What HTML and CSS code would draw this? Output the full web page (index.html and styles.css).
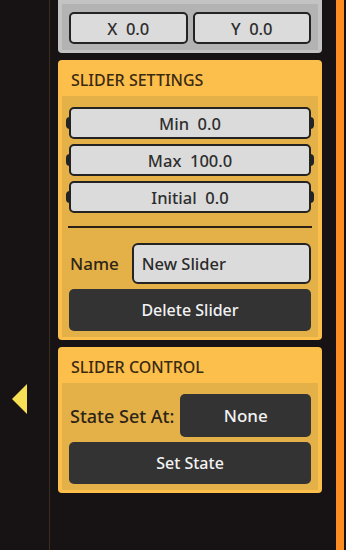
FILE: index.html
```html
<!DOCTYPE html>
<html lang="en">
<head>
<meta charset="UTF-8">
<meta name="viewport" content="width=device-width, initial-scale=1.0">
<title>Slider Inspector</title>
<link rel="stylesheet" href="styles.css">
</head>
<body>
	<div class="app">
		<div class="side">
			<div class="arrow"></div>
		</div>
		<div class="side-line"></div>

		<div class="content">
			<div class="panel grey">
				<div class="panel-tail"></div>
				<div class="panel-body">
					<div class="pair">
						<div class="field">X&nbsp;&nbsp;0.0</div>
						<div class="field">Y&nbsp;&nbsp;0.0</div>
					</div>
				</div>
			</div>

			<div class="panel">
				<div class="panel-head">SLIDER SETTINGS</div>
				<div class="panel-body">
					<div class="field knob">Min&nbsp;&nbsp;0.0</div>
					<div class="field knob">Max&nbsp;&nbsp;100.0</div>
					<div class="field knob">Initial&nbsp;&nbsp;0.0</div>
					<div class="rule"></div>
					<div class="row">
						<label for="sliderName">Name</label>
						<input type="text" id="sliderName" value="New Slider">
					</div>
					<button class="dark-btn">Delete Slider</button>
				</div>
			</div>

			<div class="panel">
				<div class="panel-head">SLIDER CONTROL</div>
				<div class="panel-body">
					<div class="row tight">
						<span class="label">State Set At:</span>
						<button class="dark-btn state">None</button>
					</div>
					<button class="dark-btn">Set State</button>
				</div>
			</div>
		</div>

		<div class="stripe"></div>
	</div>
</body>
</html>
```

FILE: styles.css
```css
body {
	margin: 0;
	padding: 0;
	background-color: #171214;
	font-family: 'Noto Sans', 'Open Sans', sans-serif;
}

.app {
	display: flex;
	height: 550px;
	overflow: hidden;
}

.side {
	width: 49px;
	flex-shrink: 0;
}

.arrow {
	width: 15px;
	height: 30px;
	margin: 384px 0 0 12px;
	background-color: #f6df55;
	clip-path: polygon(100% 0, 100% 100%, 0 50%);
}

.side-line {
	width: 1px;
	background-color: #3b2c1f;
}

.content {
	width: 264px;
	padding: 0 14px 0 8px;
	display: flex;
	flex-direction: column;
	gap: 7px;
}

.stripe {
	width: 8px;
	background-color: #fb8d22;
}

.panel {
	background-color: #fdbf4c;
	border-radius: 4px;
	padding: 0 4px 3px 4px;
}

.panel.grey {
	background-color: #c3c3c3;
	border-radius: 0 0 4px 4px;
}

.panel-tail {
	height: 4px;
}

.panel-head {
	height: 36px;
	line-height: 41px;
	padding-left: 9px;
	font-size: 16px;
	font-weight: 500;
	color: #3a2a12;
}

.panel-body {
	background-color: #e4b149;
	padding: 11px 7px 6px 7px;
	display: flex;
	flex-direction: column;
	gap: 5px;
}

.grey .panel-body {
	background-color: #b3b3b3;
	padding: 8px 7px 6px 7px;
}

.pair {
	display: flex;
	gap: 5px;
}

.pair .field {
	flex: 1;
}

.field {
	position: relative;
	height: 28px;
	line-height: 29px;
	text-align: center;
	font-size: 16.5px;
	font-weight: 500;
	color: #2e2e2e;
	background-color: #dbdbdb;
	border: 2px solid #232323;
	border-radius: 5px;
}

.knob::before,
.knob::after {
	content: "";
	position: absolute;
	top: 8px;
	width: 4px;
	height: 12px;
	background-color: #232323;
}

.knob::before {
	left: -5px;
	border-radius: 6px 0 0 6px;
}

.knob::after {
	right: -5px;
	border-radius: 0 6px 6px 0;
}

.rule {
	height: 2px;
	margin: 8px -1px 10px -1px;
	background-color: #2a2016;
}

.row {
	display: flex;
	align-items: center;
	gap: 13px;
}

.row.tight {
	gap: 6px;
}

.row label,
.row .label {
	padding-left: 1px;
	font-size: 17px;
	font-weight: 500;
	color: #2d2418;
}

.row .label {
	font-size: 18px;
}

.row input {
	flex: 1;
	min-width: 0;
	height: 41px;
	padding: 0 0 0 8px;
	font-family: inherit;
	font-size: 16.5px;
	font-weight: 500;
	color: #2a2a2a;
	background-color: #dbdbdb;
	border: 2px solid #232323;
	border-radius: 6px;
	box-sizing: border-box;
}

.dark-btn {
	height: 42px;
	font-family: inherit;
	font-size: 16px;
	font-weight: 500;
	color: #f2f2f2;
	background-color: #333333;
	border: none;
	border-radius: 5px;
}

.dark-btn.state {
	flex: 1;
	height: 43px;
	font-size: 17px;
}
```
